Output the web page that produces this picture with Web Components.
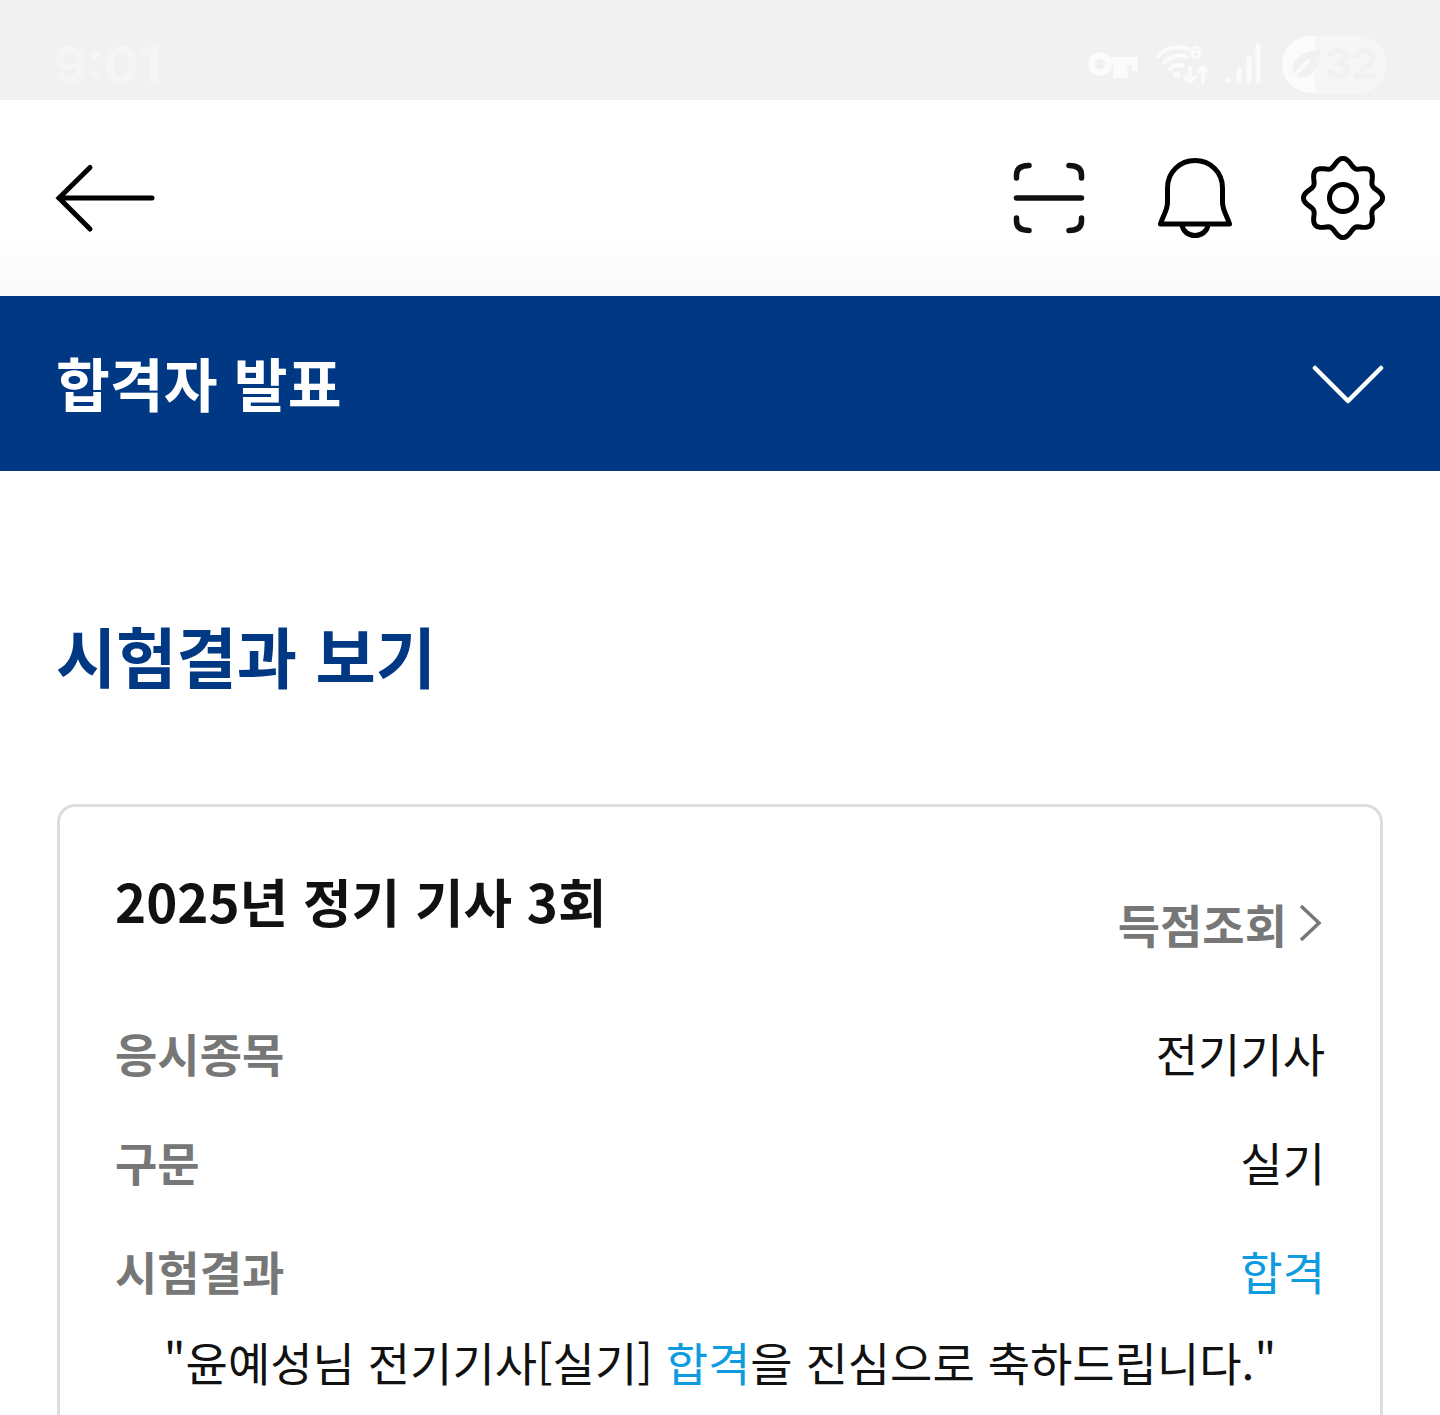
<!DOCTYPE html>
<html lang="ko"><head><meta charset="utf-8"><title>합격자 발표</title>
<style>
html,body{margin:0;padding:0;background:#fff;height:1415px;overflow:hidden}
body{font-family:"Noto Sans CJK KR","Noto Sans",sans-serif}
</style></head><body>
<app-page>
<status-bar></status-bar>
<top-nav></top-nav>
<section-band>합격자 발표</section-band>
<page-heading>시험결과 보기</page-heading>
<result-card heading="2025년 정기 기사 3회" action="득점조회">
<info-row label="응시종목">전기기사</info-row>
<info-row label="구문">실기</info-row>
<info-row label="시험결과" accent>합격</info-row>
<p-message>"윤예성님 전기기사[실기] <em>합격</em>을 진심으로 축하드립니다."</p-message>
</result-card>
</app-page>
<script>
function def(name,html,init){customElements.define(name,class extends HTMLElement{constructor(){super();const r=this.attachShadow({mode:'open'});r.innerHTML=typeof html==='function'?html(this):html;}connectedCallback(){const r=this.shadowRoot;if(init)init(this,r);}});}
def('app-page',`<style>:host{display:block;width:1440px;height:1415px;overflow:hidden}</style><slot></slot>`);
def('status-bar',`<style>
:host{display:flex;align-items:center;height:100px;background:#f1f1f1;padding:28px 53px 0 54px;box-sizing:border-box;justify-content:space-between}
.t{font:700 51px/1 Inter,Roboto,sans-serif;color:#f5f5f5}
.r{display:flex;align-items:center}
svg{display:block;flex:none}
.w{display:flex;position:relative;margin-left:18px}
.six{position:absolute;left:34px;top:0;font:700 18px/20px Inter,sans-serif;color:#fbfbfb}
.pill{width:105px;height:57px;border-radius:29px;background:linear-gradient(90deg,#fbfbfb 0 33px,#f6f6f6 33px);display:flex;align-items:center;padding-left:7px;box-sizing:border-box;font:700 42px/1 Inter,Roboto,sans-serif;color:#f1f1f1;margin-left:20px}
</style><span class="t">9:01</span><span class="r">
<svg width="50" height="28" viewBox="0 0 50 28"><g fill="none" stroke="#fbfbfb"><circle cx="12" cy="14" r="8.500" stroke-width="6.500"/><path d="M20 11H48V21" stroke-width="8"/><path d="M36 11V27H29V14" stroke-width="7"/></g></svg>
<span class="w"><svg width="56" height="42" viewBox="0 0 56 42"><g fill="none" stroke="#fbfbfb" stroke-linecap="round" stroke-width="4"><path d="M2 13C9 5 22 2 33 6M8 20C14 13 24 11 31 14M14 26C18 22 23 21 27 23"/></g><circle cx="21" cy="32" r="3.500" fill="#fbfbfb"/><g fill="none" stroke="#fbfbfb" stroke-width="3.500" stroke-linecap="round"><path d="M34 24V39M29 34L34 39L39 34M47 39V24M42 29L47 24L52 29"/></g></svg><span class="six">6</span></span>
<svg width="38" height="42" viewBox="0 0 38 42" style="margin-left:12px"><g stroke="#fbfbfb" stroke-width="5" stroke-linecap="round"><path d="M4 37V38M15 27V38M25 16V38M34 3V38"/></g></svg>
<span class="pill"><svg width="33" height="34" viewBox="0 0 32 32" style="margin-right:3px" preserveAspectRatio="none"><path d="M4 28C0 14 12 3 30 3C31 18 22 31 8 28Z" fill="#f1f1f1"/><path d="M1 31L20 12" stroke="#fbfbfb" stroke-width="3.500"/></svg>32</span></span>`);
def('top-nav',`<style>
:host{display:flex;align-items:center;justify-content:space-between;height:196px;padding:0 54px;box-sizing:border-box;background:linear-gradient(#fff 0,#fff 68%,#f9f9f9 100%)}
svg{display:block}.r{display:flex;align-items:center;gap:62px}
</style>
<svg width="104" height="72" viewBox="0 0 104 72" fill="none" stroke="#000" stroke-width="5" stroke-linecap="round"><path d="M36 5.500L5 36L36 67M5 36H98"/></svg>
<div class="r">
<svg width="84" height="84" viewBox="0 0 84 84" fill="none" stroke="#111" stroke-width="5.500" stroke-linecap="round"><path d="M8.500 42H73.500M8.500 22V19Q8.500 9.500 21 9.500M61 9.500Q73.500 9.500 73.500 19V22M8.500 62V65Q8.500 74.500 21 74.500M61 74.500Q73.500 74.500 73.500 65V62" /></svg>
<svg width="84" height="84" viewBox="0 0 84 84" fill="none" stroke="#000" stroke-width="5" stroke-linejoin="round"><path d="M41 4.500C26 4.500 13.500 16 13.500 32V46C13.500 55 9 59 6.500 68H75.500C73 59 68.500 55 68.500 46V32C68.500 16 56 4.500 41 4.500Z"/><path d="M28 69C30 83 52 83 54 69"/></svg>
<svg width="86" height="86" viewBox="0 0 86 86" fill="none" stroke="#000" stroke-width="5" stroke-linejoin="round"><circle cx="43" cy="43" r="13.500"/><path id="g"/></svg>
</div>`,null);
def('section-band',`<style>
:host{display:flex;align-items:center;justify-content:space-between;height:175px;background:#003883;color:#fff;padding:0 56px 0 56px;font-weight:700;font-size:58.500px;line-height:1}
span{margin-top:-3px}svg{display:block}
</style><span><slot></slot></span><svg width="72" height="42" viewBox="0 0 72 42" fill="none" stroke="#fff" stroke-width="4.500" stroke-linecap="round" stroke-linejoin="round"><path d="M3 5L36 38L69 5"/></svg>`);
def('page-heading',`<style>:host{display:block;color:#003883;font-weight:700;font-size:65.500px;line-height:1;padding:151px 0 0 56px}</style><slot></slot>`);
def('result-card',h=>`<style>
:host{display:block;box-sizing:border-box;width:1326px;margin:116px 0 0 57px;height:700px;border:3px solid #ddd;border-radius:18px;padding:56px 55px 0 55px}
.h{display:flex;justify-content:space-between;align-items:flex-end;margin-bottom:82px}
h2{margin:0;font-size:52.800px;line-height:74px;font-weight:700;color:#111}
.a{display:flex;align-items:center;color:#777;font-size:46px;font-weight:700;line-height:66px;margin-bottom:-19px}
svg{margin:0 3px 0 11px;display:block}
</style><div class="h"><h2>${h.getAttribute('heading')}</h2><span class="a">${h.getAttribute('action')}<svg width="24" height="40" viewBox="0 0 24 40" fill="none" stroke="#777" stroke-width="3.500"><path d="M3 3L21 20L3 37"/></svg></span></div><slot></slot>`);
def('info-row',h=>`<style>
:host{display:flex;justify-content:space-between;height:109px;align-items:flex-start;font-size:46px;line-height:66px;color:#111}
b{color:#777;font-weight:700}
:host([accent]) .v{color:#0f9be0}
</style><b>${h.getAttribute('label')}</b><span class="v"><slot></slot></span>`);
def('p-message',`<style>
:host{display:block;text-align:center;font-size:46px;line-height:66px;color:#111;margin-top:-18px;white-space:nowrap}
::slotted(em){font-style:normal;color:#0f9be0}
</style><slot></slot>`);
const nav=document.querySelector('top-nav').shadowRoot.getElementById('g');
let d='';const n=8,c=43;for(let i=0;i<=360;i+=3){const a=i*Math.PI/180,r=35.500+3.700*Math.cos(n*a)+0.400*Math.cos(4*a);const x=c+r*Math.sin(a),y=c-r*Math.cos(a);d+=(i?'L':'M')+x.toFixed(2)+' '+y.toFixed(2);}
nav.setAttribute('d',d+'Z');
</script>
</body></html>
